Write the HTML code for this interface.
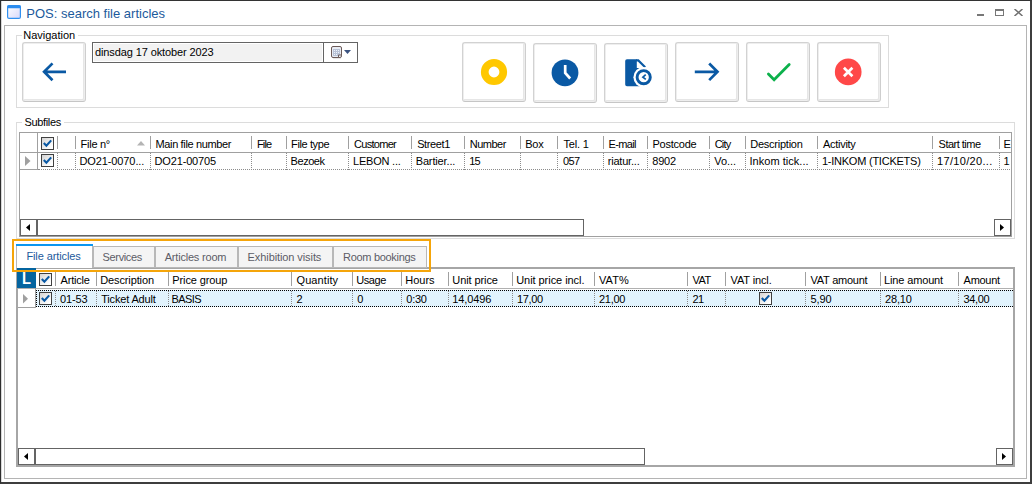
<!DOCTYPE html>
<html><head><meta charset="utf-8"><title>POS: search file articles</title>
<style>
*{box-sizing:border-box;margin:0;padding:0}
html,body{width:1032px;height:484px;overflow:hidden;background:#fff}
body{position:relative;font-family:"Liberation Sans",sans-serif;font-size:11px;color:#000}
.abs{position:absolute}
.grp{position:absolute;border:1px solid #dcdcdc}
.gap{position:absolute;background:#fff;height:3px}
.tbtn{position:absolute;width:64px;height:60px;border:1px solid #d2d2d2;border-bottom-color:#c6c6c6;border-right-color:#cecece;border-radius:3px;background:#fff;box-shadow:inset 0 0 0 1px #eeeeee,inset -1px -1px 0 1px #e6e6e6}
.t{position:absolute;white-space:nowrap;line-height:13px}
.vs{position:absolute;width:1px;background:#a0a0a0}
.hl{position:absolute;height:1px;background:#a0a0a0}
.vd{position:absolute;width:0;border-left:1px dotted #8c8c8c}
.hd{position:absolute;height:0;border-top:1px dotted #8c8c8c}
.cb{position:absolute;width:13px;height:13px;border:1px solid #404040;background:linear-gradient(135deg,#d4d4d4,#fff 85%)}
.cb svg{position:absolute;left:0;top:0}
.sbtn{position:absolute;width:17px;height:17px;border:1px solid #646464;background:#fff}
.sbtn svg{position:absolute;left:0;top:0}
.thumb{position:absolute;height:17px;border:1px solid #646464;background:#fff}
.tab{position:absolute;background:#f4f4f4;border:1px solid #b8b8b8}
</style></head><body>
<div class="abs" style="left:0;top:0;width:1032px;height:484px;border-style:solid;border-color:#333 #3e3e3e #3e3e3e #2e2e2e;border-width:1px 2px 2px 1px"></div>
<div class="abs" style="left:1px;top:1px;width:1px;height:481px;background:#d8d8d8"></div>
<div class="abs" style="left:4px;top:25px;width:1023px;height:454px;border:1px solid #b4b4b4"></div>
<svg class="abs" style="left:7px;top:5px" width="15" height="15" viewBox="0 0 15 15"><defs><linearGradient id="wg" x1="0" y1="0" x2="1" y2="1"><stop offset="0" stop-color="#fff"/><stop offset="1" stop-color="#d8d8fa"/></linearGradient></defs><rect x="0.6" y="0.6" width="12.8" height="12.8" rx="1.5" fill="url(#wg)" stroke="#3090f0" stroke-width="1.2"/><rect x="0.3" y="0.2" width="13.4" height="3" rx="1.2" fill="#2b8cf0"/></svg>
<div class="t" style="left:26.3px;top:6px;font-size:13px;line-height:16px;color:#1c5a9c">POS: search file articles</div>
<div class="abs" style="left:977px;top:14px;width:7px;height:2px;background:#777"></div>
<div class="abs" style="left:995px;top:9px;width:9px;height:7px;border:1px solid #777;border-top-width:2px"></div>
<svg class="abs" style="left:1014px;top:9px" width="9" height="7" viewBox="0 0 9 7"><path d="M0.5 0 L8.5 7 M8.5 0 L0.5 7" stroke="#707070" stroke-width="1.5" fill="none"/></svg>
<div class="grp" style="left:16px;top:35px;width:873px;height:73px"></div>
<div class="gap" style="left:22px;top:34px;width:56px"></div>
<div class="t" style="left:23.3px;top:29px;letter-spacing:-0.01px;">Navigation</div>
<div class="tbtn" style="left:22px;top:42px"></div>
<div class="abs" style="left:92px;top:42px;width:266px;height:21px;border:1px solid #646464;background:#fff"></div>
<div class="abs" style="left:94px;top:44px;width:228px;height:17px;background:#f2f2f2"></div>
<div class="abs" style="left:323px;top:42px;width:1px;height:21px;background:#646464"></div>
<div class="t" style="left:95.0px;top:46px;letter-spacing:-0.11px;">dinsdag 17 oktober 2023</div>
<svg class="abs" style="left:330px;top:45px" width="24" height="15" viewBox="0 0 24 15"><rect x="1.5" y="1.5" width="10" height="11" rx="1.5" fill="#e8ecf4" stroke="#6b5a58" stroke-width="1"/><rect x="3" y="4" width="7" height="7" fill="#b8c2d6"/><g fill="#eef2fa"><rect x="4" y="5" width="1" height="1"/><rect x="6" y="5" width="1" height="1"/><rect x="8" y="5" width="1" height="1"/><rect x="4" y="7" width="1" height="1"/><rect x="6" y="7" width="1" height="1"/><rect x="8" y="7" width="1" height="1"/><rect x="4" y="9" width="1" height="1"/><rect x="6" y="9" width="1" height="1"/></g><path d="M8.5 12.5 V10 H11.5" stroke="#6b5a58" stroke-width="1" fill="#f4f6fa"/><path d="M3 13.6 H11" stroke="#e4e4e4" stroke-width="1" fill="none"/><path d="M14 5 H21 L17.5 9 Z" fill="#3b5380"/></svg>
<div class="tbtn" style="left:462px;top:42px"></div>
<div class="tbtn" style="left:533px;top:43px"></div>
<div class="tbtn" style="left:604px;top:43px"></div>
<div class="tbtn" style="left:675px;top:42px"></div>
<div class="tbtn" style="left:746px;top:42px"></div>
<div class="tbtn" style="left:817px;top:42px"></div>
<svg class="abs" style="left:0;top:0" width="1032" height="120" viewBox="0 0 1032 120">
<path d="M66 71.8 H44.3 M52.5 63.4 L44.1 71.8 L52.5 80.2" stroke="#0a59a4" stroke-width="2.7" fill="none"/>
<circle cx="494" cy="72" r="9.25" fill="none" stroke="#ffc800" stroke-width="7.7"/>
<circle cx="565" cy="72.85" r="13.4" fill="#0a59a4"/><path d="M565.2 65 V73 L570.2 78.5" stroke="#fff" stroke-width="2.7" fill="none"/>
<path d="M627 59.3 H636.8 V68 H646 V86.2 H627 Q625.2 86.2 625.2 84.4 V61.1 Q625.2 59.3 627 59.3 Z" fill="#0a59a4"/>
<path d="M636 60.4 H638.3 L645.2 67.3" stroke="#0a59a4" stroke-width="2.1" fill="none"/>
<circle cx="643.7" cy="77.2" r="10.3" fill="#fff"/>
<circle cx="643.7" cy="77.2" r="6.6" fill="none" stroke="#0a59a4" stroke-width="2.9"/>
<path d="M645.7 74.6 L642.9 77.2 L645.8 79.4" stroke="#0a59a4" stroke-width="1.7" fill="none"/>
<path d="M694.8 71.8 H717.2 M709.2 63.5 L717.5 71.8 L709.2 80.1" stroke="#0a59a4" stroke-width="2.7" fill="none"/>
<path d="M768.4 74 L774.1 79.7 L789.2 64.6" stroke="#0cb14b" stroke-width="2.8" stroke-linecap="round" stroke-linejoin="miter" fill="none"/>
<circle cx="848.2" cy="71.9" r="13.35" fill="#ff4848"/><path d="M843.9 67.7 L852.4 76.2 M852.4 67.7 L843.9 76.2" stroke="#fff" stroke-width="2.7" fill="none"/>
</svg>
<div class="grp" style="left:16px;top:122px;width:999px;height:117px"></div>
<div class="gap" style="left:22px;top:121px;width:42px"></div>
<div class="t" style="left:24.5px;top:116px;letter-spacing:-0.34px;">Subfiles</div>
<div class="abs" style="left:19px;top:132px;width:993px;height:105px;border:1px solid #a0a0a0;background:#fff"></div>
<div class="abs" style="left:20px;top:133px;width:991px;height:103px;overflow:hidden"><div class="abs" style="left:-20px;top:-133px;width:1032px;height:484px">
<div class="vs" style="left:37px;top:133px;height:37px"></div>
<div class="hl" style="left:20px;top:152px;width:992px"></div>
<div class="hl" style="left:20px;top:169px;width:18px"></div>
<div class="hd" style="left:38px;top:169px;width:974px"></div>
<svg class="abs" style="left:25px;top:156px" width="6" height="10" viewBox="0 0 6 10"><path d="M0 0 L5.5 5 L0 10 Z" fill="#a0a0a0"/></svg>
<div class="cb" style="left:41px;top:137px"><svg width="11" height="11" viewBox="0 0 11 11"><path d="M1.8 5 L4.4 7.8 L9.2 2.4" stroke="#0a59a4" stroke-width="2.1" fill="none"/></svg></div>
<div class="cb" style="left:41px;top:154px"><svg width="11" height="11" viewBox="0 0 11 11"><path d="M1.8 5 L4.4 7.8 L9.2 2.4" stroke="#0a59a4" stroke-width="2.1" fill="none"/></svg></div>
<div class="vs" style="left:57px;top:136px;height:13px"></div>
<div class="vd" style="left:57px;top:153px;height:17px"></div>
<div class="vs" style="left:75px;top:136px;height:13px"></div>
<div class="vd" style="left:75px;top:153px;height:17px"></div>
<div class="vs" style="left:150px;top:136px;height:13px"></div>
<div class="vd" style="left:150px;top:153px;height:17px"></div>
<div class="vs" style="left:251px;top:136px;height:13px"></div>
<div class="vd" style="left:251px;top:153px;height:17px"></div>
<div class="vs" style="left:286px;top:136px;height:13px"></div>
<div class="vd" style="left:286px;top:153px;height:17px"></div>
<div class="vs" style="left:348px;top:136px;height:13px"></div>
<div class="vd" style="left:348px;top:153px;height:17px"></div>
<div class="vs" style="left:411px;top:136px;height:13px"></div>
<div class="vd" style="left:411px;top:153px;height:17px"></div>
<div class="vs" style="left:464px;top:136px;height:13px"></div>
<div class="vd" style="left:464px;top:153px;height:17px"></div>
<div class="vs" style="left:520px;top:136px;height:13px"></div>
<div class="vd" style="left:520px;top:153px;height:17px"></div>
<div class="vs" style="left:557px;top:136px;height:13px"></div>
<div class="vd" style="left:557px;top:153px;height:17px"></div>
<div class="vs" style="left:603px;top:136px;height:13px"></div>
<div class="vd" style="left:603px;top:153px;height:17px"></div>
<div class="vs" style="left:647px;top:136px;height:13px"></div>
<div class="vd" style="left:647px;top:153px;height:17px"></div>
<div class="vs" style="left:709px;top:136px;height:13px"></div>
<div class="vd" style="left:709px;top:153px;height:17px"></div>
<div class="vs" style="left:745px;top:136px;height:13px"></div>
<div class="vd" style="left:745px;top:153px;height:17px"></div>
<div class="vs" style="left:817px;top:136px;height:13px"></div>
<div class="vd" style="left:817px;top:153px;height:17px"></div>
<div class="vs" style="left:932px;top:136px;height:13px"></div>
<div class="vd" style="left:932px;top:153px;height:17px"></div>
<div class="vs" style="left:999px;top:136px;height:13px"></div>
<div class="vd" style="left:999px;top:153px;height:17px"></div>
<div class="t" style="left:80.6px;top:138px;letter-spacing:-0.27px;">File n°</div>
<div class="t" style="left:79.5px;top:155px;letter-spacing:-0.11px;">DO21-0070...</div>
<div class="t" style="left:155.5px;top:138px;letter-spacing:-0.36px;">Main file number</div>
<div class="t" style="left:154.6px;top:155px;letter-spacing:-0.17px;">DO21-00705</div>
<div class="t" style="left:256.9px;top:138px;letter-spacing:-0.80px;">File</div>
<div class="t" style="left:291.1px;top:138px;letter-spacing:-0.39px;">File type</div>
<div class="t" style="left:290.6px;top:155px;letter-spacing:-0.46px;">Bezoek</div>
<div class="t" style="left:354.0px;top:138px;letter-spacing:-0.71px;">Customer</div>
<div class="t" style="left:353.0px;top:155px;letter-spacing:-0.21px;">LEBON ...</div>
<div class="t" style="left:417.2px;top:138px;letter-spacing:-0.40px;">Street1</div>
<div class="t" style="left:415.7px;top:155px;letter-spacing:-0.14px;">Bartier...</div>
<div class="t" style="left:469.7px;top:138px;letter-spacing:-0.48px;">Number</div>
<div class="t" style="left:469.2px;top:155px;letter-spacing:-0.70px;">15</div>
<div class="t" style="left:525.3px;top:138px;letter-spacing:-0.30px;">Box</div>
<div class="t" style="left:563.5px;top:138px;letter-spacing:-0.18px;">Tel. 1</div>
<div class="t" style="left:563.0px;top:155px;letter-spacing:-0.65px;">057</div>
<div class="t" style="left:608.5px;top:138px;letter-spacing:-0.66px;">E-mail</div>
<div class="t" style="left:607.7px;top:155px;letter-spacing:-0.20px;">riatur...</div>
<div class="t" style="left:652.5px;top:138px;letter-spacing:-0.24px;">Postcode</div>
<div class="t" style="left:652.3px;top:155px;letter-spacing:-0.23px;">8902</div>
<div class="t" style="left:714.7px;top:138px;letter-spacing:-0.80px;">City</div>
<div class="t" style="left:714.2px;top:155px;letter-spacing:-0.03px;">Vo...</div>
<div class="t" style="left:750.3px;top:138px;letter-spacing:-0.25px;">Description</div>
<div class="t" style="left:749.5px;top:155px;letter-spacing:0.03px;">Inkom tick...</div>
<div class="t" style="left:822.9px;top:138px;letter-spacing:-0.27px;">Activity</div>
<div class="t" style="left:821.9px;top:155px;letter-spacing:-0.23px;">1-INKOM (TICKETS)</div>
<div class="t" style="left:938.6px;top:138px;letter-spacing:-0.51px;">Start time</div>
<div class="t" style="left:937.1px;top:155px;letter-spacing:0.32px;">17/10/20...</div>
<div class="t" style="left:1003.6px;top:138px;">E</div>
<div class="t" style="left:1003.6px;top:155px;">1</div>
<svg class="abs" style="left:137px;top:141px" width="8" height="5" viewBox="0 0 8 5"><path d="M0 4.5 L4 0 L8 4.5 Z" fill="#b4b4b4"/></svg>
</div></div>
<div class="sbtn" style="left:20px;top:219px"><svg width="15" height="15" viewBox="0 0 15 15"><path d="M9 4 L5 7.5 L9 11 Z" fill="#000"/></svg></div><div class="thumb" style="left:37px;top:219px;width:547px"></div><div class="sbtn" style="left:994px;top:219px"><svg width="15" height="15" viewBox="0 0 15 15"><path d="M5 4 L9 7.5 L5 11 Z" fill="#000"/></svg></div>
<div class="abs" style="left:16px;top:267px;width:999px;height:200px;border:2px solid #a6a6a6;background:#fff"></div>
<div class="abs" style="left:18px;top:269px;width:995px;height:196px;overflow:hidden"><div class="abs" style="left:-18px;top:-269px;width:1032px;height:484px">
<div class="hl" style="left:18px;top:288px;width:995px;background:#b0b0b0"></div>
<div class="abs" style="left:36px;top:290px;width:977px;height:17px;background:#e1f3fd;border:1px dotted #000;border-right:0"></div>
<div class="hl" style="left:18px;top:307px;width:18px"></div>
<div class="vs" style="left:35px;top:288px;height:20px"></div>
<svg class="abs" style="left:23px;top:294px" width="6" height="10" viewBox="0 0 6 10"><path d="M0 0 L5 4.75 L0 9.5 Z" fill="#a0a0a0"/></svg>
<div class="cb" style="left:39px;top:273px"><svg width="11" height="11" viewBox="0 0 11 11"><path d="M1.8 5 L4.4 7.8 L9.2 2.4" stroke="#0a59a4" stroke-width="2.1" fill="none"/></svg></div>
<div class="cb" style="left:39px;top:292px"><svg width="11" height="11" viewBox="0 0 11 11"><path d="M1.8 5 L4.4 7.8 L9.2 2.4" stroke="#0a59a4" stroke-width="2.1" fill="none"/></svg></div>
<div class="cb" style="left:759px;top:292px"><svg width="11" height="11" viewBox="0 0 11 11"><path d="M1.8 5 L4.4 7.8 L9.2 2.4" stroke="#0a59a4" stroke-width="2.1" fill="none"/></svg></div>
<div class="vs" style="left:55px;top:272px;height:14px"></div>
<div class="vd" style="left:55px;top:291px;height:15px"></div>
<div class="t" style="left:60.6px;top:274px;letter-spacing:-0.23px;">Article</div>
<div class="t" style="left:59.9px;top:293px;letter-spacing:-0.10px;">01-53</div>
<div class="vs" style="left:96px;top:272px;height:14px"></div>
<div class="vd" style="left:96px;top:291px;height:15px"></div>
<div class="t" style="left:100.2px;top:274px;letter-spacing:-0.12px;">Description</div>
<div class="t" style="left:101.2px;top:293px;letter-spacing:-0.17px;">Ticket Adult</div>
<div class="vs" style="left:168px;top:272px;height:14px"></div>
<div class="vd" style="left:168px;top:291px;height:15px"></div>
<div class="t" style="left:172.3px;top:274px;letter-spacing:-0.11px;">Price group</div>
<div class="t" style="left:171.6px;top:293px;letter-spacing:-0.60px;">BASIS</div>
<div class="vs" style="left:291px;top:272px;height:14px"></div>
<div class="vd" style="left:291px;top:291px;height:15px"></div>
<div class="t" style="left:296.5px;top:274px;letter-spacing:0.09px;">Quantity</div>
<div class="t" style="left:296.5px;top:293px;">2</div>
<div class="vs" style="left:352px;top:272px;height:14px"></div>
<div class="vd" style="left:352px;top:291px;height:15px"></div>
<div class="t" style="left:356.2px;top:274px;letter-spacing:-0.42px;">Usage</div>
<div class="t" style="left:357.2px;top:293px;">0</div>
<div class="vs" style="left:401px;top:272px;height:14px"></div>
<div class="vd" style="left:401px;top:291px;height:15px"></div>
<div class="t" style="left:405.3px;top:274px;letter-spacing:-0.03px;">Hours</div>
<div class="t" style="left:406.3px;top:293px;letter-spacing:-0.27px;">0:30</div>
<div class="vs" style="left:448px;top:272px;height:14px"></div>
<div class="vd" style="left:448px;top:291px;height:15px"></div>
<div class="t" style="left:452.3px;top:274px;letter-spacing:-0.09px;">Unit price</div>
<div class="t" style="left:452.3px;top:293px;letter-spacing:-0.10px;">14,0496</div>
<div class="vs" style="left:512px;top:272px;height:14px"></div>
<div class="vd" style="left:512px;top:291px;height:15px"></div>
<div class="t" style="left:516.2px;top:274px;letter-spacing:-0.05px;">Unit price incl.</div>
<div class="t" style="left:516.9px;top:293px;letter-spacing:-0.35px;">17,00</div>
<div class="vs" style="left:594px;top:272px;height:14px"></div>
<div class="vd" style="left:594px;top:291px;height:15px"></div>
<div class="t" style="left:599.0px;top:274px;letter-spacing:0.07px;">VAT%</div>
<div class="t" style="left:599.0px;top:293px;letter-spacing:-0.30px;">21,00</div>
<div class="vs" style="left:687px;top:272px;height:14px"></div>
<div class="vd" style="left:687px;top:291px;height:15px"></div>
<div class="t" style="left:692.6px;top:274px;letter-spacing:-0.60px;">VAT</div>
<div class="t" style="left:692.6px;top:293px;letter-spacing:-0.80px;">21</div>
<div class="vs" style="left:725px;top:272px;height:14px"></div>
<div class="vd" style="left:725px;top:291px;height:15px"></div>
<div class="t" style="left:730.5px;top:274px;letter-spacing:-0.12px;">VAT incl.</div>
<div class="vs" style="left:805px;top:272px;height:14px"></div>
<div class="vd" style="left:805px;top:291px;height:15px"></div>
<div class="t" style="left:810.6px;top:274px;letter-spacing:-0.26px;">VAT amount</div>
<div class="t" style="left:810.6px;top:293px;letter-spacing:-0.17px;">5,90</div>
<div class="vs" style="left:880px;top:272px;height:14px"></div>
<div class="vd" style="left:880px;top:291px;height:15px"></div>
<div class="t" style="left:884.0px;top:274px;letter-spacing:-0.14px;">Line amount</div>
<div class="t" style="left:885.0px;top:293px;letter-spacing:-0.15px;">28,10</div>
<div class="vs" style="left:958px;top:272px;height:14px"></div>
<div class="vd" style="left:958px;top:291px;height:15px"></div>
<div class="t" style="left:963.6px;top:274px;letter-spacing:-0.30px;">Amount</div>
<div class="t" style="left:963.6px;top:293px;letter-spacing:-0.38px;">34,00</div>
</div></div>
<div class="abs" style="left:17px;top:268px;width:19px;height:20px;background:#04649f"></div>
<div class="t" style="left:21.8px;top:270px;font-weight:bold;font-size:16px;line-height:18px;color:#fff;transform:scaleX(0.92);transform-origin:0 0">L</div>
<div class="sbtn" style="left:18px;top:448px"><svg width="15" height="15" viewBox="0 0 15 15"><path d="M9 4 L5 7.5 L9 11 Z" fill="#000"/></svg></div><div class="thumb" style="left:35px;top:448px;width:610px"></div><div class="sbtn" style="left:996px;top:448px"><svg width="15" height="15" viewBox="0 0 15 15"><path d="M5 4 L9 7.5 L5 11 Z" fill="#000"/></svg></div>
<div class="tab" style="left:93px;top:246px;width:62px;height:22px"></div>
<div class="t" style="left:102.6px;top:251px;letter-spacing:-0.36px;color:#5c5c66">Services</div>
<div class="tab" style="left:155px;top:246px;width:83px;height:22px"></div>
<div class="t" style="left:164.7px;top:251px;letter-spacing:-0.20px;color:#5c5c66">Articles room</div>
<div class="tab" style="left:238px;top:246px;width:95px;height:22px"></div>
<div class="t" style="left:247.6px;top:251px;letter-spacing:-0.09px;color:#5c5c66">Exhibition visits</div>
<div class="tab" style="left:333px;top:246px;width:94px;height:22px"></div>
<div class="t" style="left:343.0px;top:251px;letter-spacing:-0.30px;color:#5c5c66">Room bookings</div>
<div class="abs" style="left:16px;top:244px;width:77px;height:24px;background:#fff;border-top:2px solid #0a96f0;border-left:1px solid #b8b8b8;border-right:1px solid #b8b8b8"></div>
<div class="abs" style="left:16px;top:244px;width:77px;height:2px;background:#0a96f0"></div>
<div class="t" style="left:26.4px;top:250px;letter-spacing:-0.10px;color:#1c5a9c">File articles</div>
<div class="abs" style="left:12px;top:239px;width:419px;height:33px;border:2px solid #f5a50a"></div>
</body></html>
